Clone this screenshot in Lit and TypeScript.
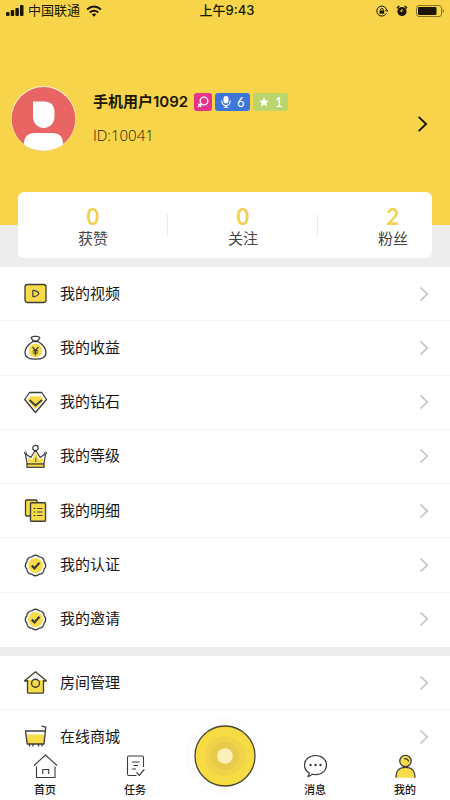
import { LitElement, html, css, svg, TemplateResult } from "lit";
import { customElement, property } from "lit/decorators.js";

const INK = "#3d3a3a";
const FILL = "#f6dc48";

const menuIcons: Record<string, TemplateResult> = {
  video: svg`<rect x="2" y="3.500" width="21" height="18" rx="2.500" fill=${FILL} stroke=${INK} stroke-width="1.3"/>
    <path d="M9.800 10.200q0-1.200 1.200-.9 4.500 1.200 4.800 3.200-.3 2-4.800 3.200-1.200.3-1.200-.9z" fill="none" stroke=${INK} stroke-width="1.200"/>`,
  money: svg`<path d="M10 6.500C5 9.500 2 14 2 18c0 4.500 4 6.200 10.500 6.200S23 22.500 23 18c0-4-3-8.500-8-11.500z" fill="#fff" stroke=${INK} stroke-width="1.3"/>
    <circle cx="12.500" cy="15.500" r="6.800" fill=${FILL}/>
    <path d="M10.200 5.800 8.200 2.800C9 .8 11 1.600 12.500 1.400c1.500-.2 3.500-.4 4.300 1.400l-2 3z" fill="#fff" stroke=${INK} stroke-width="1.3" stroke-linejoin="round"/>
    <path d="M9.500 12l3 3.500 3-3.500M12.500 15.500v5M9.800 15.800h5.400M9.800 18h5.400" fill="none" stroke=${INK} stroke-width="1.200"/>`,
  diamond: svg`<path d="M6.500 2.500h12.300L23.500 9.500 12.500 22.500 1.700 9.500z" fill="#fff" stroke=${INK} stroke-width="1.3" stroke-linejoin="round"/>
    <path d="M7.500 6.200h10.300l2.700 3.800-8 9.500-8-9.500z" fill=${FILL}/>
    <path d="M6.500 10l6 5.500 6.500-5.500" fill="none" stroke=${INK} stroke-width="1.700"/>`,
  crown: svg`<path d="M4.200 20 2.300 9.500l5.500 4L12.500 6l4.700 7.500 5.500-4L20.800 20z" fill="#fff" stroke=${INK} stroke-width="1.200" stroke-linejoin="round"/>
    <path d="M5.500 19.500 5 14l4 1.800 3.500-7.600 3.500 7.600 4-1.800-.5 5.500z" fill=${FILL}/>
    <rect x="4" y="20" width="17" height="3.300" fill=${FILL} stroke=${INK} stroke-width="1.200"/>
    <circle cx="12.500" cy="4" r="2.700" fill="#fff" stroke=${INK} stroke-width="1.200"/>
    <circle cx="2.400" cy="9" r="1" fill="#fff" stroke=${INK}/><circle cx="22.600" cy="9" r="1" fill="#fff" stroke=${INK}/>
    <path d="M12.700 13.500v4.500" stroke="#a5671c" stroke-width="1.400"/>`,
  detail: svg`<rect x="2.500" y="2" width="11.500" height="16" rx="1" fill=${FILL} stroke=${INK} stroke-width="1.300"/>
    <rect x="7.500" y="4.700" width="15" height="18.500" rx="1" fill=${FILL} stroke=${INK} stroke-width="1.400"/>
    <path d="M10.500 10.500h2m1.500 0h5.500M10.500 14h2m1.500 0h5.500M10.500 17.500h2m1.500 0h5.500" stroke=${INK} stroke-width="1.200"/>`,
  badge: svg`<path d="M21.100 8.900A4.800 4.800 0 0 1 21.100 16.100A4.800 4.800 0 0 1 16.100 21.100A4.800 4.800 0 0 1 8.900 21.100A4.800 4.800 0 0 1 3.900 16.100A4.800 4.800 0 0 1 3.900 8.900A4.800 4.800 0 0 1 8.900 3.900A4.800 4.800 0 0 1 16.100 3.900A4.800 4.800 0 0 1 21.100 8.900z" fill="#fff" stroke=${INK} stroke-width="1.300" stroke-linejoin="round"/>
    <circle cx="12.500" cy="12.500" r="7.400" fill=${FILL}/>
    <path d="M8.800 12.600l2.700 2.700 5-5.500" fill="none" stroke=${INK} stroke-width="2.200"/>`,
  house: svg`<path d="M4.500 10v12q0 1.200 1.200 1.200h13.600q1.200 0 1.200-1.200V10L12.500 3.500z" fill=${FILL}/>
    <path d="M5 10l7.500-6.500L20 10z" fill="#fff"/>
    <path d="M4.500 10v12q0 1.200 1.200 1.200h13.600q1.200 0 1.200-1.200V10M1.300 11h3.200M20.500 11h3.200M1.300 11 12.500 1.800 23.700 11" fill="none" stroke=${INK} stroke-width="1.300"/>
    <circle cx="12.500" cy="13.200" r="4" fill=${FILL} stroke=${INK} stroke-width="1.400"/>`,
  cart: svg`<path d="M3 7l1 13h17l1.300-13z" fill="#fff"/><path d="M3.400 10.500h18.300L20.800 20H4z" fill=${FILL}/>
    <path d="M18.500 2.200l4.300 1L21 20H4.200L2.500 7h19.800" fill="none" stroke=${INK} stroke-width="1.300" stroke-linejoin="round"/>
    <path d="M6.500 20v2.500M10 20v2.500M15.500 20v2.500M19 20v2.500" stroke=${INK} stroke-width="1.300"/>`,
};

const tabIcons: Record<string, TemplateResult> = {
  home: svg`<path d="M1 12.500 12.500 2 24 12.500M3.500 13.500V24.500H22V13.500M9.700 21v-4.500h6V21" fill="none" stroke=${INK} stroke-width="1.100"/>`,
  task: svg`<path d="M20.500 14V4.500Q20.500 3 19 3H6Q4.500 3 4.500 4.500V21Q4.500 22.500 6 22.500h7.500" fill="none" stroke=${INK} stroke-width="1.100"/>
    <path d="M9 9h7.500M10.500 12.500H15M9 16h4M13.500 19.500l2.800 2.800 5-6" fill="none" stroke=${INK} stroke-width="1.200"/>`,
  chat: svg`<path d="M12.500 2.500C6 2.500 1.500 6.800 1.500 12c0 3.800 2 6.500 4.800 8l-1.300 3.700 4.500-2.500c1 .3 2 .4 3 .4C19 21.600 23.500 17.400 23.500 12S19 2.500 12.500 2.500z" fill="#fff" stroke=${INK} stroke-width="1.200" stroke-linejoin="round"/>
    <g fill=${INK}><circle cx="7.500" cy="12" r="1.200"/><circle cx="12.500" cy="12" r="1.200"/><circle cx="17.500" cy="12" r="1.200"/></g>`,
  me: svg`<path d="M3 24.800c0-7.500 3-10.500 9.500-10.500S22 17.300 22 24.800z" fill=${FILL}/>
    <path d="M3 24.800c0-7.500 3-10.500 9.500-10.500S22 17.300 22 24.800" fill="none" stroke=${INK} stroke-width="1.200"/>
    <circle cx="12.500" cy="8" r="5.700" fill=${FILL} stroke=${INK} stroke-width="1.200"/>
    <path d="M11 5.700q3.500-.5 4.800 2.800" fill="none" stroke=${INK} stroke-width="1.200"/>`,
};

const chevron = html`<svg class="chevron" viewBox="0 0 10 16" width="10" height="16" aria-hidden="true">
  <path d="M1.500 1.500 8.300 8 1.500 14.500" fill="none" stroke="currentColor" stroke-width="1.700"/></svg>`;

@customElement("status-bar")
class StatusBar extends LitElement {
  static styles = css`
    :host { display: grid; grid-template-columns: 1fr auto 1fr; align-items: center; height: 22px; padding: 0 6px;
      font-size: 13px; line-height: 20px; color: #1c1600; }
    .side { display: flex; align-items: center; gap: 4px; }
    .right { justify-content: flex-end; gap: 8px; }
    span { padding-bottom: 2px; }
    .time { font-weight: 500; padding-left: 4px; }
    svg { display: block; }
  `;
  render() {
    return html`
      <div class="side">
        <svg width="18" height="12" viewBox="0 0 18 12" fill="#1c1600"><rect y="7" width="3.500" height="4" rx="1"/><rect x="4.700" y="5" width="3.500" height="6" rx="1"/><rect x="9.400" y="3" width="3.500" height="8" rx="1"/><rect x="14" y="0" width="3.500" height="11" rx="1"/></svg>
        <span>中国联通</span>
        <svg width="20" height="12" viewBox="0 0 20 12" fill="none" stroke="#1c1600" stroke-width="2"><path d="M3 4.500Q10-1.500 17 4.500M5.700 7.500Q10 4 14.300 7.500"/><path d="M7.800 9.300Q10 7.600 12.200 9.300L10 11.700z" fill="#1c1600" stroke="none"/></svg>
      </div>
      <span class="time">上午9:43</span>
      <div class="side right">
        <svg width="12" height="12" viewBox="0 0 12 12" fill="none" stroke="#1c1600"><path d="M10.200 8.500A5 5 0 1 1 10.800 5.500M9.300 5l1.500 1.500L12 4.800" /><rect x="3.600" y="5.500" width="4.600" height="3.200" fill="#1c1600" stroke="none"/><path d="M4.500 5.500V4.300q1.400-2 2.800 0v1.200"/></svg>
        <svg width="12" height="12" viewBox="0 0 12 12"><circle cx="6" cy="6.500" r="4.600" fill="#1c1600"/><path d="M1 3.300 3.300 1M11 3.300 8.700 1" stroke="#1c1600" stroke-width="1.500"/><path d="M6 4v2.700L3.800 5.500" fill="none" stroke="#f7d449"/></svg>
        <svg width="28" height="12" viewBox="0 0 28 12"><rect x=".5" y=".5" width="25" height="11" rx="2.500" fill="none" stroke="#8a7420"/><rect x="2" y="2" width="18.500" height="8" rx="1" fill="#1c1600"/><path d="M26.700 4v4q1.300-.6 1.300-2t-1.300-2z" fill="#8a7420"/></svg>
      </div>`;
  }
}

@customElement("menu-row")
class MenuRow extends LitElement {
  @property() icon = "";
  @property() label = "";
  static styles = css`
    :host { display: flex; flex: 1 0 54px; }
    a { flex: 1; display: flex; align-items: center; gap: 12px; padding: 0 21px 0 23px; border-bottom: 1px solid #f4f4f4;
      box-sizing: border-box; color: #161616; text-decoration: none; font-size: 15px; line-height: 22px; }
    :host(:last-of-type) a { border-bottom-color: transparent; }
    .label { flex: 1; }
    .chevron { color: #c3c3c3; }
  `;
  render() {
    return html`<a href="#${this.icon}">
      <svg width="25" height="25" viewBox="0 0 25 25" aria-hidden="true">${menuIcons[this.icon]}</svg>
      <span class="label">${this.label}</span>${chevron}</a>`;
  }
}

@customElement("app-root")
class AppRoot extends LitElement {
  static styles = css`
    :host { display: flex; flex-direction: column; height: 100vh; background: #fff;
      font-family: Inter, "Noto Sans CJK SC", sans-serif; }
    main { flex: 1; min-height: 0; overflow-y: auto; scrollbar-width: none; background: #ededed; }
    header { height: 225px; background: #f7d449; }
    .profile { display: flex; align-items: center; gap: 17px; padding: 64px 22px 0 11px; color: #1c1600; text-decoration: none; }
    .avatar { display: block; }
    .who { flex: 1; display: flex; flex-direction: column; gap: 11px; }
    .name-line { display: flex; align-items: center; gap: 3px; }
    .name { font-size: 15px; line-height: 22px; font-weight: 600; padding-right: 3px; }
    .tag { display: flex; align-items: center; justify-content: center; gap: 6px; width: 35px; height: 18px; border-radius: 3px;
      color: #fff; font: 13px/18px Lato, sans-serif; }
    .tag.pink { width: 18px; background: #e5338c; }
    .tag.blue { background: #3f74d8; }
    .tag.green { background: #b9d56c; }
    .id { font: 300 15px/22px "Open Sans", sans-serif; }
    .profile .chevron { margin-top: 10px; width: 11px; height: 18px; }
    .stats { display: flex; height: 66px; margin: -33px 18px 9px; overflow: hidden; border-radius: 6px; background: #fff; position: relative; }
    .stat { flex: 0 0 calc(100vw / 3); display: flex; flex-direction: column; align-items: center; justify-content: center;
      background: linear-gradient(#ececec, #ececec) right center / 1px 22px no-repeat; color: #444; text-decoration: none;
      padding-top: 5px; box-sizing: border-box; font-size: 15px; line-height: 22px; }
    .stat:last-child { background: none; }
    .stat b { font: 700 22px/22px Lato, sans-serif; color: #f2d153; }
    nav.group { display: flex; flex-direction: column; background: #fff; }
    .first { min-height: 380px; margin-bottom: 9px; }
    .tabs { display: grid; grid-template-columns: repeat(5, 1fr); height: 50px; background: #fff; position: relative; }
    .tab { display: flex; flex-direction: column; align-items: center; justify-content: flex-end; gap: 3px; padding-bottom: 2px;
      color: #161616; text-decoration: none; font-size: 11px; line-height: 16px; font-weight: 500; }
    .tab svg { display: block; }
    .live { position: absolute; left: 50%; bottom: 6px; transform: translateX(-50%); width: 76px; height: 76px; padding: 0;
      border: 0; border-radius: 50%; background: none; }
    .live svg { display: block; }
    .tab.me { grid-column: 5; }
    .tab.chat { grid-column: 4; }
  `;

  private groups = [
    { cls: "group first", rows: [["video", "我的视频"], ["money", "我的收益"], ["diamond", "我的钻石"], ["crown", "我的等级"],
      ["detail", "我的明细"], ["badge", "我的认证"], ["badge", "我的邀请"]] },
    { cls: "group", rows: [["house", "房间管理"], ["cart", "在线商城"]] },
  ];
  private stats = [["0", "获赞"], ["0", "关注"], ["2", "粉丝"]];
  private tabs = [["home", "首页"], ["task", "任务"], ["chat", "消息"], ["me", "我的"]];

  render() {
    return html`
      <main>
        <header>
          <status-bar></status-bar>
          <a class="profile" href="#profile">
            <svg class="avatar" width="65" height="65" viewBox="0 0 65 65" aria-hidden="true">
              <defs><clipPath id="face"><circle cx="32.500" cy="32.500" r="32.500"/></clipPath></defs>
              <circle cx="32.500" cy="32.500" r="32.500" fill="#fff3d8"/><circle cx="32.500" cy="33" r="31.900" fill="#e86564"/>
              <path d="M22 15.500H33C39.500 15.500 43.500 19.500 43.500 26v4.500C43.500 37 39 42 32.700 42S22 37 22 30.500z" fill="#fff"/>
              <path d="M13 65V58Q13 47 24 47H41Q52 47 52 58v7z" fill="#fff" clip-path="url(#face)"/>
            </svg>
            <span class="who">
              <span class="name-line">
                <span class="name">手机用户1092</span>
                <span class="tag pink"><svg width="12" height="12" viewBox="0 0 12 12" fill="none" stroke="#fff" stroke-width="1.300"><circle cx="7" cy="5" r="3.800"/><path d="M4.300 7.700 1 11M1.300 7.800l3 3"/></svg></span>
                <span class="tag blue"><svg width="10" height="12" viewBox="0 0 10 12"><rect x="2.500" y="0" width="5" height="7.500" rx="2.500" fill="#fff"/><path d="M.8 4.500v.8a4.200 4.200 0 0 0 8.400 0v-.8M5 9.500v2M2.700 11.300h4.600" fill="none" stroke="#fff" stroke-width="1.100"/></svg>6</span>
                <span class="tag green"><svg width="10" height="10" viewBox="0 0 10 10"><path d="M5 .3 6.400 3.500l3.400.3L7.200 6.100 8 9.500 5 7.700 2 9.500l.8-3.400L.2 3.800l3.400-.3z" fill="#fff"/></svg>1</span>
              </span>
              <span class="id">ID:10041</span>
            </span>
            ${chevron}
          </a>
        </header>
        <section class="stats">
          ${this.stats.map(([n, label]) => html`<a class="stat" href="#stats"><b>${n}</b>${label}</a>`)}
        </section>
        ${this.groups.map((g) => html`<nav class=${g.cls}>
          ${g.rows.map(([icon, label]) => html`<menu-row icon=${icon} label=${label}></menu-row>`)}
        </nav>`)}
      </main>
      <nav class="tabs">
        ${this.tabs.map(([id, label]) => html`<a class="tab ${id}" href="#${id}">
          <svg width="25" height="26" viewBox="0 0 25 26" aria-hidden="true">${tabIcons[id]}</svg>${label}</a>`)}
        <button class="live" aria-label="直播">
          <svg width="76" height="76" viewBox="0 0 76 76">
            <circle cx="38" cy="38" r="37.500" fill="#fff" stroke="#f8f8f8"/>
            <circle cx="38" cy="38" r="30" fill="#f7db42" stroke="#4a4436" stroke-width="1.300"/>
            <circle cx="38" cy="38" r="20" fill="#f0d348"/><circle cx="38" cy="38" r="14" fill="#e8ca4c"/>
            <circle cx="38" cy="38" r="7.800" fill="#fbf0b8"/>
          </svg>
        </button>
      </nav>`;
  }
}
